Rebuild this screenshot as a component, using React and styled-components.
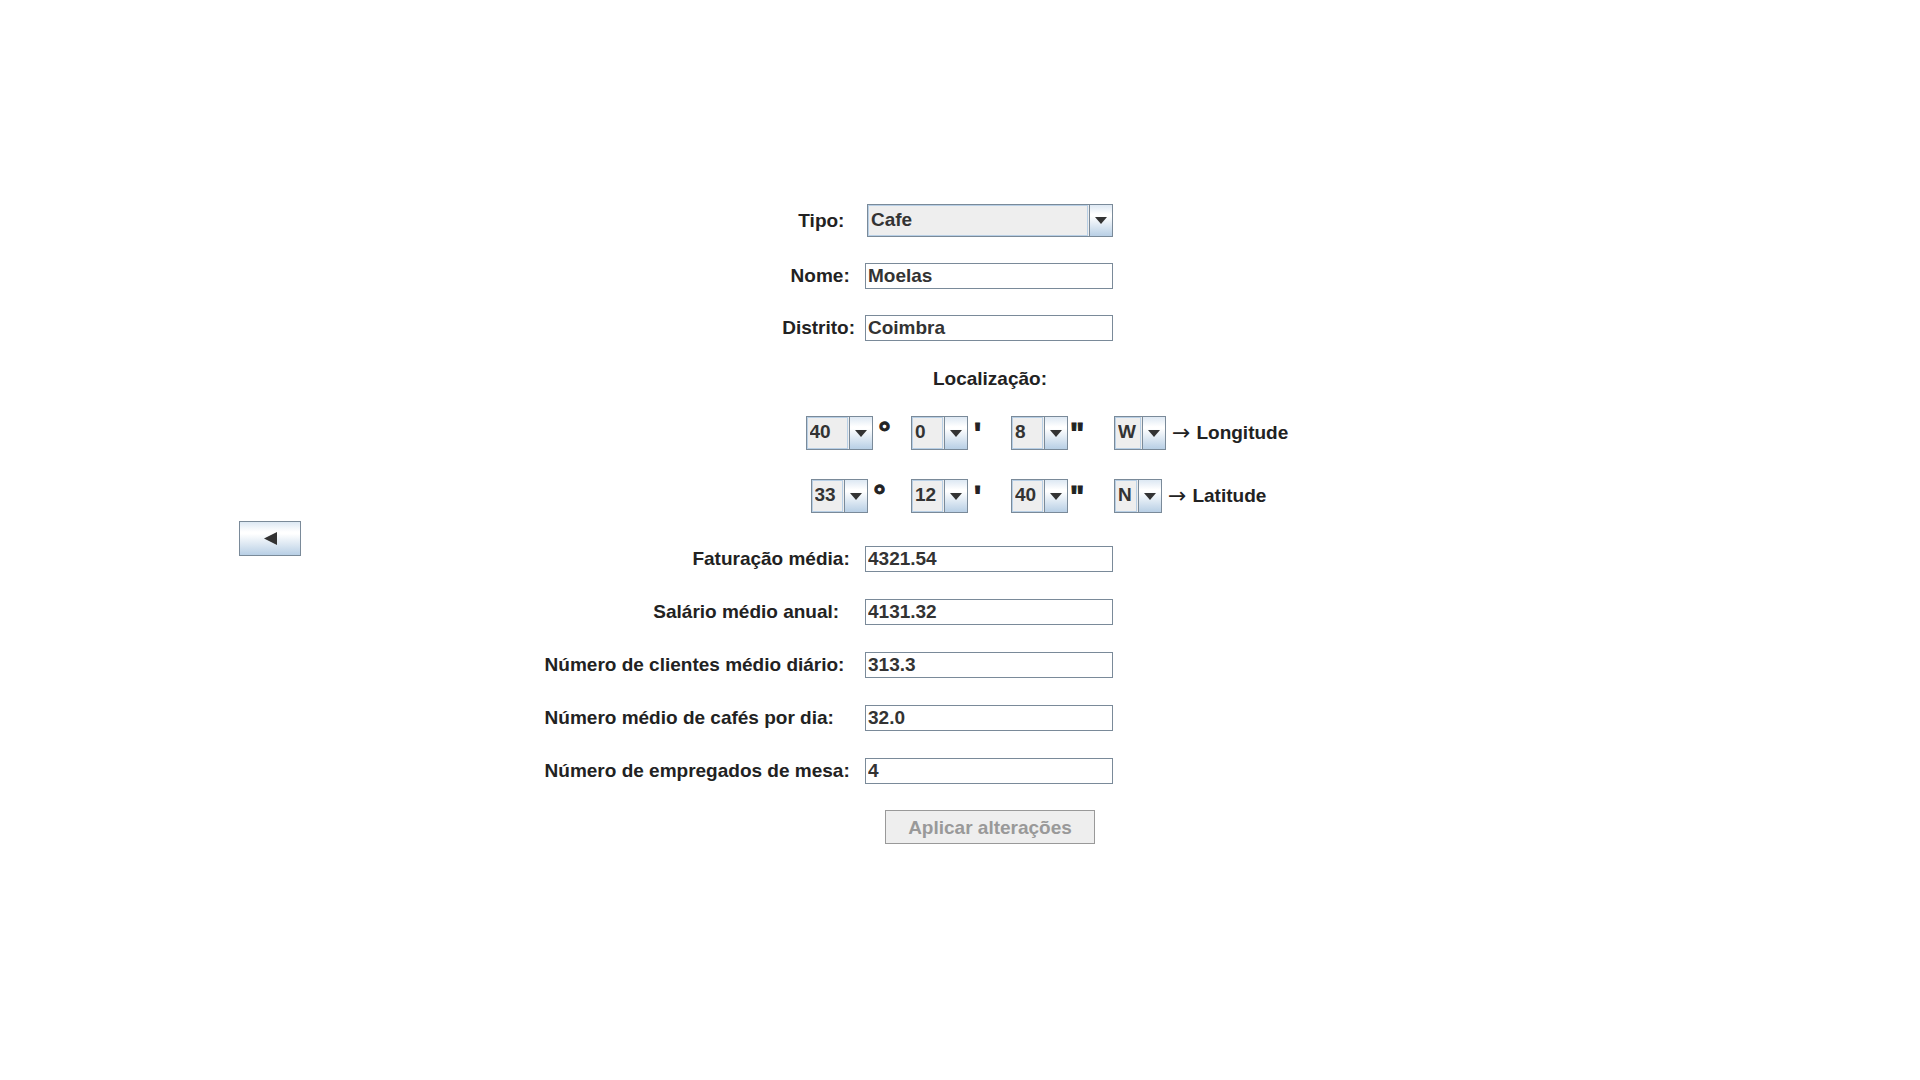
import React, { useState } from "react";
import styled, { createGlobalStyle } from "styled-components";

const GlobalStyle = createGlobalStyle`
  * { box-sizing: border-box; }
  body {
    margin: 0;
    background: #ffffff;
    color: #222222;
    font: bold 19px/22px "Liberation Sans", Arial, sans-serif;
  }
  input, select, button { font: inherit; color: #333333; border-radius: 0; margin: 0; }
`;

const steel = "linear-gradient(to bottom, #dde8f3 0%, #ffffff 30%, #ffffff 36%, #b8cfe5 100%)";

const Page = styled.main`
  display: grid;
  grid-template-columns: 9fr 23fr;
  align-items: center;
  min-height: 100vh;
  padding-bottom: 4px;
`;

const Side = styled.nav`
  display: flex;
  justify-content: center;
`;

const BackButton = styled.button`
  display: flex;
  align-items: center;
  justify-content: center;
  width: 62px;
  height: 35px;
  padding: 0;
  border: 1px solid #7a8a99;
  background: ${steel};
`;

const Form = styled.form`
  display: flex;
  flex-direction: column;
  gap: 26px;
  padding-bottom: 28px;
`;

const Fields = styled.div`
  display: grid;
  grid-template-columns: 315px 248px;
  column-gap: 10px;
  row-gap: ${(p) => p.$gap}px;
  align-items: center;
  justify-items: end;
`;

const Label = styled.label`
  display: flex;
  align-items: center;
  gap: 6px;
  white-space: pre;
`;

const Arrow = styled.span`
  font-family: "DejaVu Sans", sans-serif;
  font-weight: normal;
  font-size: 22px;
`;

const TextInput = styled.input`
  width: 100%;
  height: 26px;
  padding: 0 2px;
  border: 1px solid #7a8a99;
  background: #ffffff;
  outline: none;
`;

const FieldColumn = styled.div`
  width: 248px;
  margin-left: 326px;
  line-height: 23px;
  display: flex;
  justify-content: center;
`;

const SelectBox = styled.span`
  display: flex;
  width: ${(p) => p.$width}px;
  height: ${(p) => p.$height || 34}px;
  position: relative;
`;

const SelectControl = styled.select`
  appearance: none;
  width: 100%;
  height: 100%;
  padding: 0 24px 2px 3px;
  border: 1px solid #7a8a99;
  background: #eeeeee;
  outline: none;
`;

const ValueFrame = styled.span`
  position: absolute;
  inset: 1px 25px 1px 1px;
  border: 1px solid #b8cfe5;
  pointer-events: none;
`;

const ArrowBox = styled.span`
  position: absolute;
  inset: 1px 1px 1px auto;
  width: 23px;
  display: flex;
  align-items: center;
  justify-content: center;
  border-left: 1px solid #7a8a99;
  background: ${steel};
  pointer-events: none;
`;

const Coordinates = styled.div`
  display: grid;
  grid-template-columns: 86px 80px 83px max-content;
  column-gap: 20px;
  row-gap: 29px;
  margin-left: 265px;
  margin-bottom: 7px;
`;

const Part = styled.div`
  display: flex;
  align-items: center;
  justify-content: ${(p) => (p.$center ? "center" : "flex-start")};
  gap: ${(p) => p.$gap || 4}px;
`;

const Unit = styled.span`
  font-size: 30px;
  line-height: 34px;
  -webkit-text-stroke: 1px #222222;
`;

const ApplyButton = styled.button`
  width: 210px;
  height: 34px;
  padding: 0;
  border: 1px solid #999999;
  background: #eeeeee;
  &:disabled { color: #999999; }
`;

function Select({ options, width, height, ...rest }) {
  const [value, setValue] = useState(options[0]);
  return (
    <SelectBox $width={width} $height={height}>
      <SelectControl value={value} onChange={(e) => setValue(e.target.value)} {...rest}>
        {options.map((o) => (
          <option key={o}>{o}</option>
        ))}
      </SelectControl>
      <ValueFrame />
      <ArrowBox>
        <svg width="12" height="7" viewBox="0 0 12 7" aria-hidden="true">
          <path d="M0 0H12L6 7Z" fill="#333333" />
        </svg>
      </ArrowBox>
    </SelectBox>
  );
}

function Field({ id, label, value }) {
  return (
    <>
      <Label htmlFor={id}>{label}</Label>
      <TextInput id={id} defaultValue={value} />
    </>
  );
}

const figures = [
  { id: "faturacao", label: "Faturação média: ", value: "4321.54" },
  { id: "salario", label: "Salário médio anual:   ", value: "4131.32" },
  { id: "clientes", label: "Número de clientes médio diário:  ", value: "313.3" },
  { id: "cafes", label: "Número médio de cafés por dia:    ", value: "32.0" },
  { id: "empregados", label: "Número de empregados de mesa: ", value: "4" },
];

const coordinates = [
  { name: "Longitude", degrees: "40", degreesWidth: 67, minutes: "0", seconds: "8", side: ["W", "E"], sideWidth: 52 },
  { name: "Latitude", degrees: "33", degreesWidth: 57, minutes: "12", seconds: "40", side: ["N", "S"], sideWidth: 48 },
];

export default function App() {
  return (
    <>
      <GlobalStyle />
      <Page>
        <Side>
          <BackButton type="button" aria-label="Voltar">
            <svg width="13" height="13" viewBox="0 0 13 13" aria-hidden="true">
              <path d="M13 0V13L0 6.5Z" fill="#333333" />
            </svg>
          </BackButton>
        </Side>
        <Form onSubmit={(e) => e.preventDefault()}>
          <Fields $gap={26}>
            <Label htmlFor="tipo">{"Tipo:  "}</Label>
            <Select id="tipo" options={["Cafe"]} width={246} height={33} />
            <Field id="nome" label="Nome: " value="Moelas" />
            <Field id="distrito" label="Distrito:" value="Coimbra" />
          </Fields>
          <FieldColumn>Localização:</FieldColumn>
          <Coordinates>
            {coordinates.map((c) => (
              <React.Fragment key={c.name}>
                <Part $center $gap={6}>
                  <Select aria-label={`${c.name} graus`} options={[c.degrees]} width={c.degreesWidth} />
                  <Unit>°</Unit>
                </Part>
                <Part $gap={6}>
                  <Select aria-label={`${c.name} minutos`} options={[c.minutes]} width={57} />
                  <Unit>'</Unit>
                </Part>
                <Part $gap={2}>
                  <Select aria-label={`${c.name} segundos`} options={[c.seconds]} width={57} />
                  <Unit>"</Unit>
                </Part>
                <Part $gap={6}>
                  <Select id={c.name} options={c.side} width={c.sideWidth} />
                  <Label htmlFor={c.name}>
                    <Arrow>→</Arrow>
                    <span>{c.name}</span>
                  </Label>
                </Part>
              </React.Fragment>
            ))}
          </Coordinates>
          <Fields $gap={27}>
            {figures.map((f) => (
              <Field key={f.id} {...f} />
            ))}
          </Fields>
          <FieldColumn>
            <ApplyButton type="submit" disabled>
              Aplicar alterações
            </ApplyButton>
          </FieldColumn>
        </Form>
      </Page>
    </>
  );
}
